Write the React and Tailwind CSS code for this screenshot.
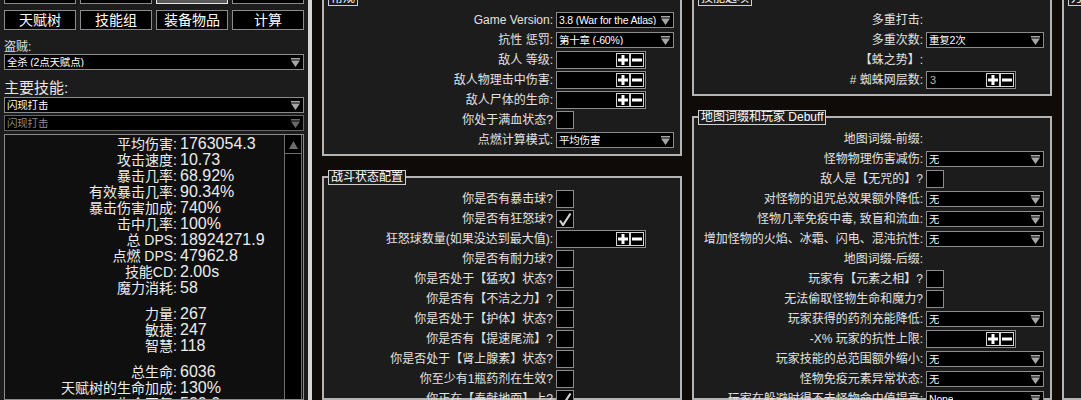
import React from 'react';

const Arrow = ({ dim }) => (
  <svg width="9" height="9" viewBox="0 0 9 9" className={dim ? 'text-[#6a6a6a]' : 'text-[#a6a6a6]'}>
    <rect x="0" y="0" width="9" height="1.5" fill="currentColor" />
    <path d="M0 2.5H9L4.5 9Z" fill="currentColor" />
  </svg>
);

const Select = ({ value, wide, dim }) => (
  <div
    className={`flex h-[16px] shrink-0 items-center justify-between border bg-black pl-[2px] pr-[3px] text-[10.5px] leading-none ${
      dim ? 'border-[#666] text-[#8e8e8e]' : 'border-[#8c8c8c] text-white'
    } ${wide ? 'w-full' : 'w-[118px]'}`}
  >
    <span className="overflow-hidden whitespace-nowrap tracking-[-0.2px]">{value}</span>
    <Arrow dim={dim} />
  </div>
);

const StepBtn = ({ minus }) => (
  <div className="flex h-[14px] w-[14px] items-center justify-center border border-[#d4d4d4] bg-black">
    <svg width="10" height="10" viewBox="0 0 10 10">
      <rect x="0" y="3.5" width="10" height="3" fill="#fff" />
      {!minus && <rect x="3.5" y="0" width="3" height="10" fill="#fff" />}
    </svg>
  </div>
);

const NumInput = ({ value }) => (
  <div className="flex h-[18px] w-[90px] items-center border border-[#8c8c8c] bg-black pl-[3px] pr-[1px] text-[11px] text-[#b8b8b8]">
    <span className="flex-1">{value}</span>
    <StepBtn />
    <StepBtn minus />
  </div>
);

const Check = ({ on }) => (
  <div className="flex h-[18px] w-[18px] items-center justify-center border border-[#8c8c8c] bg-black">
    {on && (
      <svg width="14" height="14" viewBox="0 0 14 14">
        <path d="M2 8.5l3 4.5L12.5 1.5" stroke="#d0d0d0" strokeWidth="2.2" fill="none" />
      </svg>
    )}
  </div>
);

const Row = ({ label, children }) => (
  <div className="grid h-[20px] shrink-0 grid-cols-[232px_1fr] items-center">
    <span className="whitespace-nowrap pr-[3px] text-right text-[12px] text-[#e2e2e2]">{label}</span>
    <div className="flex items-center">{children}</div>
  </div>
);

const Section = ({ title, children, className = '' }) => (
  <div className={`relative border-2 border-[#b4b4b4] bg-[#1c1c1c] pt-[11px] pb-[4px] ${className}`}>
    <div className="absolute -top-[8px] left-[4px] z-10 h-[15px] whitespace-nowrap border border-[#cfcfcf] bg-[#1c1c1c] px-[2px] text-[12px] leading-[13px] text-white">
      {title}
    </div>
    {children}
  </div>
);

const control = (c) => {
  if (!c) return null;
  if (c.t === 'sel') return <Select value={c.v} />;
  if (c.t === 'num') return <NumInput value={c.v} />;
  if (c.t === 'chk') return <Check on={c.v} />;
  return null;
};

const general = [
  ['Game Version:', { t: 'sel', v: '3.8 (War for the Atlas)' }],
  ['抗性 惩罚:', { t: 'sel', v: '第十章 (-60%)' }],
  ['敌人 等级:', { t: 'num', v: '' }],
  ['敌人物理击中伤害:', { t: 'num', v: '' }],
  ['敌人尸体的生命:', { t: 'num', v: '' }],
  ['你处于满血状态?', { t: 'chk', v: false }],
  ['点燃计算模式:', { t: 'sel', v: '平均伤害' }],
];

const combat = [
  ['你是否有暴击球?', { t: 'chk', v: false }],
  ['你是否有狂怒球?', { t: 'chk', v: true }],
  ['狂怒球数量(如果没达到最大值):', { t: 'num', v: '' }],
  ['你是否有耐力球?', { t: 'chk', v: false }],
  ['你是否处于【猛攻】状态?', { t: 'chk', v: false }],
  ['你是否有【不洁之力】?', { t: 'chk', v: false }],
  ['你是否处于【护体】状态?', { t: 'chk', v: false }],
  ['你是否有【提速尾流】?', { t: 'chk', v: false }],
  ['你是否处于【肾上腺素】状态?', { t: 'chk', v: false }],
  ['你至少有1瓶药剂在生效?', { t: 'chk', v: false }],
  ['你正在【奉献地面】上?', { t: 'chk', v: true }],
];

const skill = [
  ['多重打击:', null],
  ['多重次数:', { t: 'sel', v: '重复2次' }],
  ['【蛛之势】:', null],
  ['# 蜘蛛网层数:', { t: 'num', v: '3' }],
];

const mapMods = [
  ['地图词缀-前缀:', null],
  ['怪物物理伤害减伤:', { t: 'sel', v: '无' }],
  ['敌人是【无咒的】?', { t: 'chk', v: false }],
  ['对怪物的诅咒总效果额外降低:', { t: 'sel', v: '无' }],
  ['怪物几率免疫中毒, 致盲和流血:', { t: 'sel', v: '无' }],
  ['增加怪物的火焰、冰霜、闪电、混沌抗性:', { t: 'sel', v: '无' }],
  ['地图词缀-后缀:', null],
  ['玩家有【元素之相】?', { t: 'chk', v: false }],
  ['无法偷取怪物生命和魔力?', { t: 'chk', v: false }],
  ['玩家获得的药剂充能降低:', { t: 'sel', v: '无' }],
  ['-X% 玩家的抗性上限:', { t: 'num', v: '' }],
  ['玩家技能的总范围额外缩小:', { t: 'sel', v: '无' }],
  ['怪物免疫元素异常状态:', { t: 'sel', v: '无' }],
  ['玩家在躲避时得不去怪物命中值提高:', { t: 'sel', v: 'None' }],
];

const stats = [
  ['平均伤害:', '1763054.3'],
  ['攻击速度:', '10.73'],
  ['暴击几率:', '68.92%'],
  ['有效暴击几率:', '90.34%'],
  ['暴击伤害加成:', '740%'],
  ['击中几率:', '100%'],
  ['总 DPS:', '18924271.9'],
  ['点燃 DPS:', '47962.8'],
  ['技能CD:', '2.00s'],
  ['魔力消耗:', '58'],
  null,
  ['力量:', '267'],
  ['敏捷:', '247'],
  ['智慧:', '118'],
  null,
  ['总生命:', '6036'],
  ['天赋树的生命加成:', '130%'],
  ['生命回复:', '500.0'],
];

const Btn = ({ label, active }) => (
  <div
    className={`flex h-[20px] items-center justify-center border text-[14px] text-white ${
      active ? 'border-[#e6e6e6] bg-[#5a5a5a]' : 'border-[#8c8c8c] bg-black'
    }`}
  >
    {label}
  </div>
);

const renderRows = (rows) => rows.map(([l, c]) => <Row key={l} label={l}>{control(c)}</Row>);

export default function App() {
  return (
    <div className="flex h-[400px] w-[1081px] overflow-hidden bg-[#0e0b09] font-['Liberation_Sans','Noto_Sans_CJK_SC',sans-serif]">
      {/* left build panel */}
      <div className="flex w-[308px] shrink-0 flex-col bg-[#1c1c1c] px-[4px]">
        <div className="-mt-[16px] grid shrink-0 grid-cols-4 gap-[4px]">
          <Btn label="" />
          <Btn label="" />
          <Btn label="" active />
          <Btn label="" />
        </div>
        <div className="mt-[6px] grid shrink-0 grid-cols-4 gap-[4px]">
          <Btn label="天赋树" />
          <Btn label="技能组" />
          <Btn label="装备物品" />
          <Btn label="计算" />
        </div>
        <div className="mt-[10px] h-[14px] shrink-0 text-[12px] leading-[14px] text-[#e2e2e2]">盗贼:</div>
        <Select value="全杀 (2点天赋点)" wide />
        <div className="mt-[8px] h-[19px] shrink-0 text-[15px] leading-[19px] text-[#e8e8e8]">主要技能:</div>
        <Select value="闪现打击" wide />
        <div className="mt-[2px] shrink-0">
          <Select value="闪现打击" wide dim />
        </div>
        <div className="mt-[3px] flex min-h-0 flex-1 overflow-hidden border border-[#8c8c8c] bg-[#0f0f0f]">
          <div className="flex-1 pt-[1px]">
            {stats.map((s, i) =>
              s ? (
                <div key={i} className="grid h-[16px] grid-cols-[172px_1fr] leading-[16px] text-[#ececec]">
                  <span className="whitespace-nowrap text-right text-[14px]">{s[0]}</span>
                  <span className="whitespace-nowrap pl-[3px] text-[16px]">{s[1]}</span>
                </div>
              ) : (
                <div key={i} className="h-[10px]" />
              )
            )}
          </div>
          <div className="mr-[1px] flex w-[18px] flex-col border-x border-[#6e6e6e] bg-black">
            <div className="mt-[1px] flex h-[18px] items-center justify-center border-b border-[#6e6e6e]">
              <svg width="9" height="8" viewBox="0 0 9 8">
                <path d="M4.5 0L9 8H0Z" fill="#6e6e6e" />
              </svg>
            </div>
          </div>
        </div>
      </div>

      <div className="w-[4px] shrink-0 bg-[#d6d6d6]" />

      {/* config area */}
      <div className="flex flex-1 gap-[10px] pl-[10px]">
        <div className="-mt-[3px] flex w-[360px] shrink-0 flex-col gap-[20px]">
          <Section title="常规" className="shrink-0">{renderRows(general)}</Section>
          <Section title="战斗状态配置" className="min-h-0 flex-1">{renderRows(combat)}</Section>
        </div>
        <div className="-mt-[3px] flex w-[360px] shrink-0 flex-col gap-[20px]">
          <Section title="技能选项" className="shrink-0">{renderRows(skill)}</Section>
          <Section title="地图词缀和玩家 Debuff" className="min-h-0 flex-1">{renderRows(mapMods)}</Section>
        </div>
        <div className="-mt-[3px] flex w-[360px] shrink-0 flex-col">
          <Section title="万能选项" className="flex-1" />
        </div>
      </div>
    </div>
  );
}
